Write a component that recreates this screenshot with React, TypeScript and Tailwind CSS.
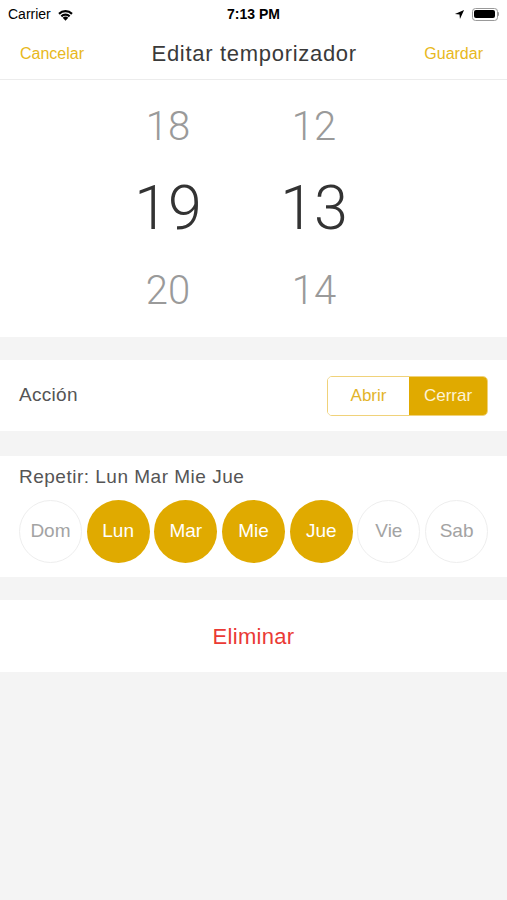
import React from "react";

const days = [
  { l: "Dom", on: false },
  { l: "Lun", on: true },
  { l: "Mar", on: true },
  { l: "Mie", on: true },
  { l: "Jue", on: true },
  { l: "Vie", on: false },
  { l: "Sab", on: false },
];

export default function App() {
  return (
    <div
      className="w-[507px] h-[900px] bg-[#f4f4f4] flex flex-col"
      style={{ fontFamily: '"Liberation Sans", Arial, sans-serif' }}
    >
      {/* status bar */}
      <div className="h-[28px] bg-white flex items-center justify-between px-[8px] relative">
        <div className="flex items-center gap-[6px] text-[14px] text-black">
          <span>Carrier</span>
          <svg width="17" height="13" viewBox="0 0 16 12">
            <path d="M8 11.8 L5.4 9 A3.6 3.6 0 0 1 10.6 9 Z" fill="#000" />
            <path d="M3.4 7 A6.4 6.4 0 0 1 12.6 7 L11.2 8.5 A4.5 4.5 0 0 0 4.8 8.5 Z" fill="#000" />
            <path d="M1.2 4.7 A9.5 9.5 0 0 1 14.8 4.7 L13.4 6.2 A7.6 7.6 0 0 0 2.6 6.2 Z" fill="#000" />
          </svg>
        </div>
        <div className="absolute left-0 right-0 text-center text-[14px] font-bold text-black pointer-events-none">
          7:13 PM
        </div>
        <div className="flex items-center gap-[7px]">
          <svg width="11" height="11" viewBox="0 0 12 12">
            <path d="M11 1 L1 5.5 L6 6 L6.5 11 Z" fill="#000" />
          </svg>
          <div className="flex items-center">
            <div className="w-[26px] h-[13px] rounded-[3.5px] border border-[#999] p-[1.5px]">
              <div className="w-full h-full bg-black rounded-[2px]" />
            </div>
            <div className="w-[1.5px] h-[4px] bg-[#999] rounded-r-sm" />
          </div>
        </div>
      </div>

      {/* nav bar */}
      <div className="h-[52px] bg-white flex items-center justify-between pl-[20px] pr-[24px] border-b border-[#ececec]">
        <span className="text-[16px] text-[#e8b820]">Cancelar</span>
        <span className="text-[22px] tracking-[0.7px] text-[#3a3a3a]">Editar temporizador</span>
        <span className="text-[16px] text-[#e8b820]">Guardar</span>
      </div>

      {/* picker */}
      <div
        className="h-[257px] bg-white flex justify-center gap-[90px] pt-[6px] pr-[25px]"
        style={{ fontFamily: 'Roboto, "Liberation Sans", sans-serif' }}
      >
        {[
          ["18", "19", "20"],
          ["12", "13", "14"],
        ].map((col, i) => (
          <div key={i} className="w-[56px] flex flex-col items-center">
            <div className="h-[82px] flex items-center text-[40px] font-light text-[#9a9a9a]">{col[0]}</div>
            <div className="h-[82px] flex items-center text-[61px] font-light text-[#333]">{col[1]}</div>
            <div className="h-[82px] flex items-center text-[40px] font-light text-[#9a9a9a]">{col[2]}</div>
          </div>
        ))}
      </div>

      {/* Acción */}
      <div className="mt-[23px] h-[71px] bg-white flex items-center justify-between pl-[19px] pr-[19px]">
        <span className="text-[19px] tracking-[0.3px] text-[#555]">Acción</span>
        <div className="flex h-[40px] w-[161px] rounded-[5px] border border-[#f0d27a] overflow-hidden text-[17px]">
          <div className="w-[81px] flex items-center justify-center text-[#e3b42a] bg-white">Abrir</div>
          <div className="flex-1 flex items-center justify-center text-[#fdf3d6] bg-[#e0aa00]">Cerrar</div>
        </div>
      </div>

      {/* Repetir */}
      <div className="mt-[25px] h-[121px] bg-white flex flex-col px-[19px] pt-[9px]">
        <span className="text-[19px] tracking-[0.5px] text-[#555] leading-[24px]">Repetir: Lun Mar Mie Jue</span>
        <div className="flex gap-[4.8px] mt-[11px]">
          {days.map((d) => (
            <div
              key={d.l}
              className={
                d.on
                  ? "w-[63px] h-[63px] rounded-full bg-[#e0aa00] text-white flex items-center justify-center text-[19px]"
                  : "w-[63px] h-[63px] rounded-full border border-[#eeeeee] text-[#a3a3a3] flex items-center justify-center text-[19px]"
              }
            >
              {d.l}
            </div>
          ))}
        </div>
      </div>

      {/* Eliminar */}
      <div className="mt-[23px] h-[72px] bg-white flex items-center justify-center">
        <span className="text-[22px] tracking-[0.3px] text-[#ea3a35]">Eliminar</span>
      </div>
    </div>
  );
}
